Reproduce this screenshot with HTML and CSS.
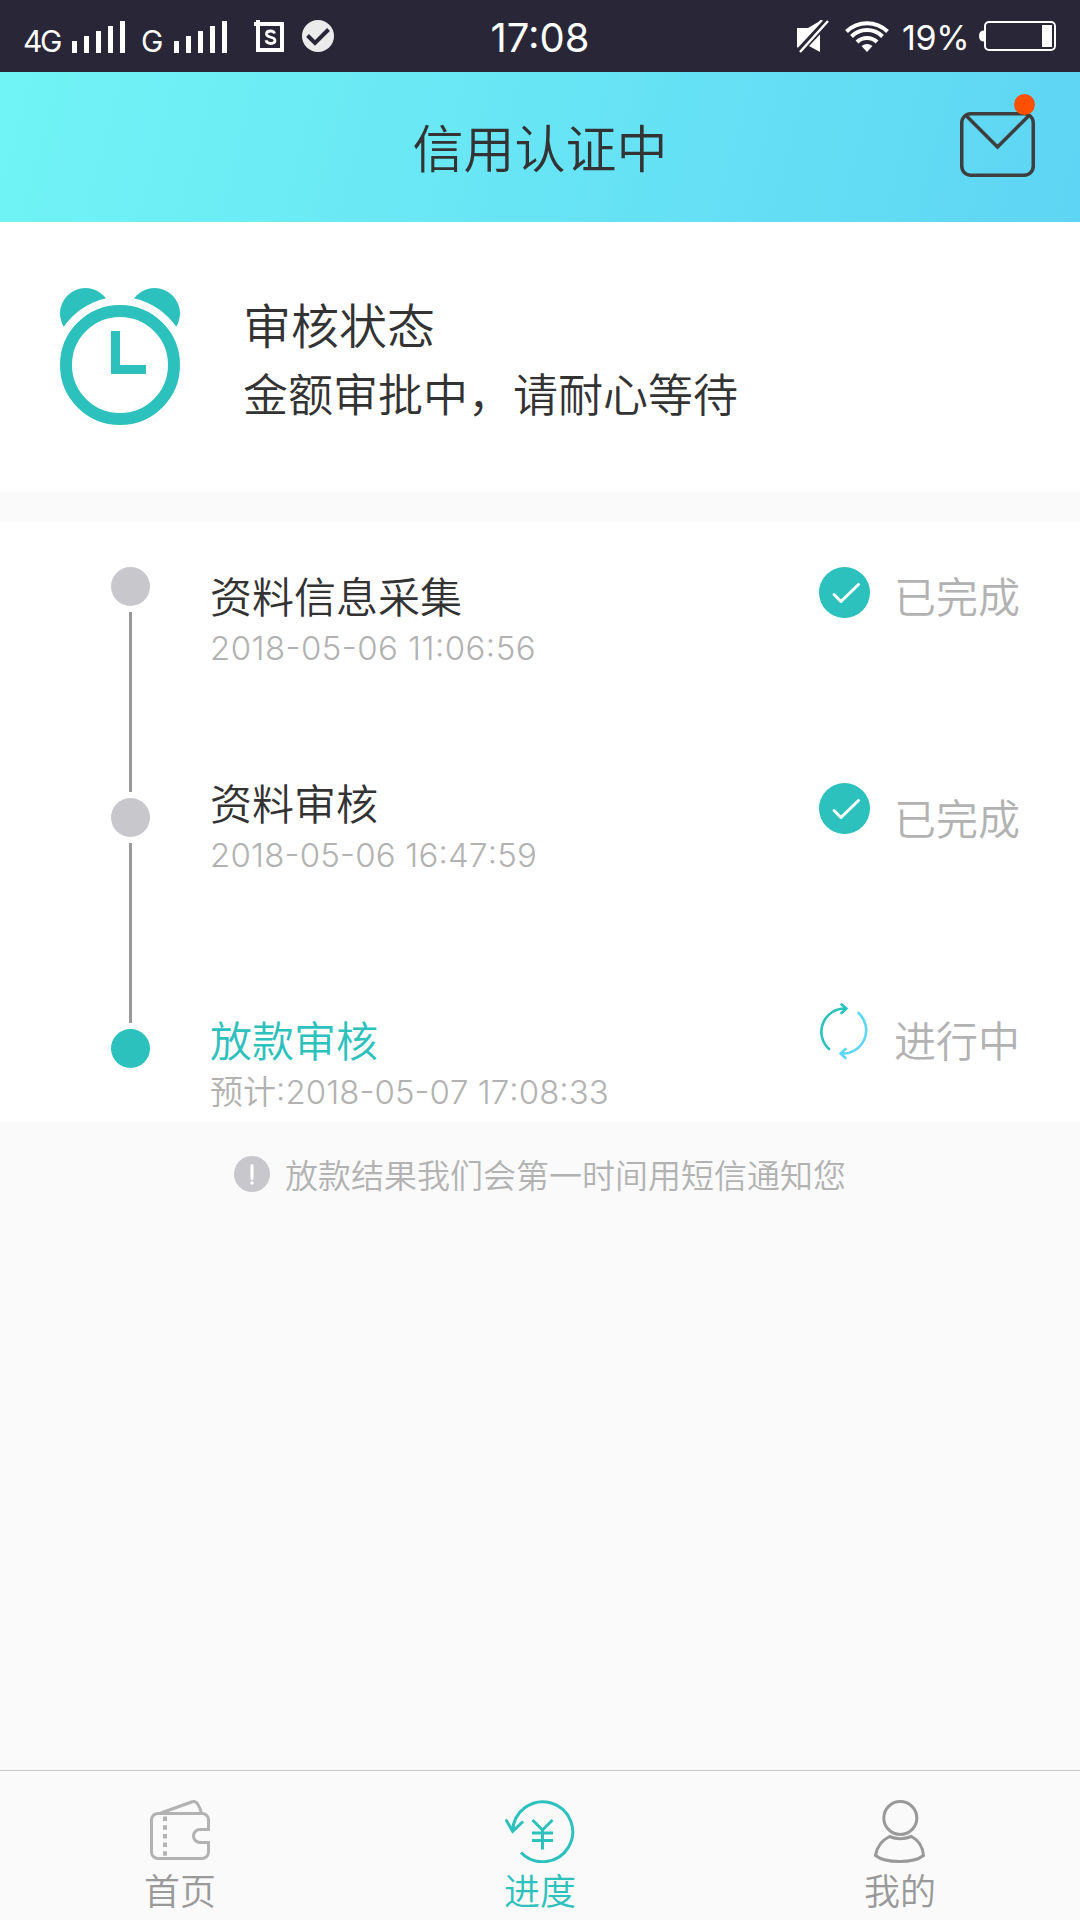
FILE: index.html
```html
<!DOCTYPE html>
<html lang="zh-CN">

<head>
  <meta charset="UTF-8">
  <meta name="viewport" content="width=device-width, initial-scale=1.0">
  <title>信用认证中</title>
  <link rel="stylesheet" href="styles.css">
</head>

<body>

  <div class="status-bar">
    <div class="status-left">
      <span class="net">4G</span>
      <svg class="signal" width="53" height="32" viewBox="0 0 53 32" fill="#fff">
        <path d="M0 20h5v12H0zM12 15h5v17h-5zM24 10h5v22h-5zM36 5h5v27h-5zM48 0h5v32h-5z"/>
      </svg>
      <span class="net net-second">G</span>
      <svg class="signal" width="53" height="32" viewBox="0 0 53 32" fill="#fff">
        <path d="M0 20h5v12H0zM12 15h5v17h-5zM24 10h5v22h-5zM36 5h5v27h-5zM48 0h5v32h-5z"/>
      </svg>
      <svg class="app-icon" width="30" height="32" viewBox="0 0 30 32" fill="none">
        <path d="M4 4h24v26H4z" stroke="#fff" stroke-width="4"/>
        <path d="M0 2h6v4H0zM2 0h4v4H2z" fill="#fff"/>
        <path d="M20.500 13.500C20 11.500 18.500 11 16.500 11c-2.500 0-4 1-4 3 0 4.500 8.500 2 8.500 6.500 0 2-1.800 3-4.300 3-2.500 0-4.200-1-4.700-3.200" stroke="#fff" stroke-width="2.800"/>
      </svg>
      <svg class="check-icon" width="32" height="32" viewBox="0 0 32 32">
        <circle cx="16" cy="16" r="16" fill="#ebebeb"/>
        <path d="M5.500 15.500l7.500 7.500L26.500 9.500" fill="none" stroke="#292637" stroke-width="4"/>
      </svg>
    </div>
    <div class="clock">17:08</div>
    <div class="status-right">
      <svg width="32" height="33" viewBox="0 0 32 33">
        <path d="M0 8h11L23 1v31l-11-6H0z" fill="#fff"/>
        <path d="M2 31L30 1" stroke="#292637" stroke-width="8"/>
        <path d="M0 27L25 0M3 32L31 1" stroke="#fff" stroke-width="2.500"/>
      </svg>
      <svg class="wifi" width="44" height="32" viewBox="0 0 44 32" fill="none" stroke="#fff" stroke-width="4">
        <path d="M1.500 11.500a29.500 29.500 0 0 1 41 0M6.500 16.500a22 22 0 0 1 31 0M12 22a14.500 14.500 0 0 1 20 0"/>
        <path d="M22 32l-5.500-6q5.500-4 11 0z" fill="#fff" stroke="none"/>
      </svg>
      <span class="percent">19%</span>
      <svg class="battery" width="77" height="30" viewBox="0 0 77 30">
        <path d="M5 9.500Q0 9.500 0 15t5 5.500z" fill="#fff"/>
        <rect x="6" y="1" width="70" height="28" rx="4" fill="none" stroke="#fff" stroke-width="2"/>
        <path d="M63 4h10v22H63z" fill="#fff"/>
      </svg>
    </div>
  </div>

  <header class="header">
    <h1 class="header-title">信用认证中</h1>
    <div class="mail">
      <svg width="75" height="65" viewBox="0 0 75 65" fill="none" stroke="#3e3e3e" stroke-width="3.500">
        <rect x="1.750" y="1.750" width="71.500" height="61.500" rx="9"/>
        <path d="M6 3.500l31.500 31.500L69 3.500"/>
      </svg>
      <span class="mail-dot"></span>
    </div>
  </header>

  <section class="summary">
    <svg class="alarm" width="120" height="137" viewBox="0 0 120 137">
      <g fill="#2cc1bd">
        <circle cx="25.500" cy="25.500" r="25.500"/>
        <circle cx="94.500" cy="25.500" r="25.500"/>
      </g>
      <circle cx="60" cy="77" r="68" fill="#fff"/>
      <circle cx="60" cy="77" r="54" fill="none" stroke="#2cc1bd" stroke-width="12"/>
      <path d="M51 43h9v34h26v9H51z" fill="#2cc1bd"/>
    </svg>
    <div class="summary-text">
      <h2>审核状态</h2>
      <p>金额审批中，请耐心等待</p>
    </div>
  </section>

  <section class="timeline">
    <div class="track">
      <span class="dot"></span>
      <span class="line"></span>
      <span class="dot"></span>
      <span class="line"></span>
      <span class="dot active"></span>
    </div>

    <ul class="steps">
      <li class="step">
        <h3>资料信息采集</h3>
        <p>2018-05-06 11:06:56</p>
      </li>
      <li class="step">
        <h3>资料审核</h3>
        <p>2018-05-06 16:47:59</p>
      </li>
      <li class="step active">
        <h3>放款审核</h3>
        <p>预计:2018-05-07 17:08:33</p>
      </li>
    </ul>

    <ul class="states">
      <li class="state">
        <svg width="51" height="51" viewBox="0 0 51 51">
          <circle cx="25.500" cy="25.500" r="25.500" fill="#2cc1bd"/>
          <path d="M15 27.500l7 7L39.500 17.500" fill="none" stroke="#fff" stroke-width="3" stroke-linecap="round" stroke-linejoin="round"/>
        </svg>
        <span>已完成</span>
      </li>
      <li class="state">
        <svg width="51" height="51" viewBox="0 0 51 51">
          <circle cx="25.500" cy="25.500" r="25.500" fill="#2cc1bd"/>
          <path d="M15 27.500l7 7L39.500 17.500" fill="none" stroke="#fff" stroke-width="3" stroke-linecap="round" stroke-linejoin="round"/>
        </svg>
        <span>已完成</span>
      </li>
      <li class="state">
        <svg width="51" height="57" viewBox="0 0 51 57" fill="none" stroke-width="2.600" stroke-linecap="round" stroke-linejoin="round">
          <path d="M10 46A23.300 23.300 0 0 1 27 5.500M22.500 1.500l5 4-5 4.500" stroke="#2cc1bd"/>
          <path d="M39.500 10A23.300 23.300 0 0 1 22 50.500M26.500 46l-5 4.500 5 4.500" stroke="#5ed7f5"/>
        </svg>
        <span>进行中</span>
      </li>
    </ul>
  </section>

  <div class="notice">
    <svg width="36" height="36" viewBox="0 0 36 36">
      <circle cx="18" cy="18" r="18" fill="#c8c7cc"/>
      <path d="M18 9.500v13" stroke="#fff" stroke-width="3" stroke-linecap="round"/>
      <circle cx="18" cy="27" r="1.800" fill="#fff"/>
    </svg>
    <span>放款结果我们会第一时间用短信通知您</span>
  </div>

  <nav class="tabbar">
    <a class="tab">
      <svg width="60" height="63" viewBox="0 0 60 63" fill="none" stroke="#b2b2b2" stroke-width="3">
        <path d="M60 29.500h-10a6.500 6.500 0 0 0 0 13h10M58.500 42V52a6.500 6.500 0 0 1-6.500 6.500H8A6.500 6.500 0 0 1 1.500 52V20A6.500 6.500 0 0 1 8 13.500h44a6.500 6.500 0 0 1 6.500 6.500v9"/>
        <path d="M11 13L41.500 2q4-1.500 6.500 2.500 2 3 3.500 9"/>
        <path d="M15 16.500v40" stroke-width="4" stroke-dasharray="4.500 4.200"/>
      </svg>
      <span>首页</span>
    </a>
    <a class="tab active">
      <svg width="71" height="63" viewBox="0 0 71 63" fill="none" stroke="#2cc1bd" stroke-width="3">
        <path d="M16 52.500A30 30 0 1 0 7.700 31M.8 19.500l6.900 11.800L18 21.500"/>
        <path d="M27.500 20L37.500 30l10-10M37.500 30v19.500M27 33h21M27 40.500h21"/>
      </svg>
      <span>进度</span>
    </a>
    <a class="tab">
      <svg width="53" height="63" viewBox="0 0 53 63" fill="none" stroke="#999" stroke-width="3">
        <circle cx="26.300" cy="18" r="16.500"/>
        <path d="M15.500 36.500Q26 41 37.500 36.500 48.500 42.500 49.500 55.500 42 61.500 25.500 61.500T1.500 55.500Q3.500 42.500 15.500 36.500z"/>
      </svg>
      <span>我的</span>
    </a>
  </nav>

</body>

</html>
```
FILE: styles.css
```css
* {
  box-sizing: border-box;
}

body {
  display: flex;
  flex-direction: column;
  width: 1080px;
  height: 1920px;
  margin: 0;
  overflow: hidden;
  background-color: #fafafa;
  color: #333;
  font-family: "Noto Sans CJK SC", sans-serif;
  font-weight: 350;
}

h1, h2, h3, p, ul {
  margin: 0;
  padding: 0;
  font-weight: 350;
}

ul {
  list-style: none;
}

svg {
  display: block;
  flex-shrink: 0;
}

/* phone status bar */
.status-bar {
  display: grid;
  grid-template-columns: 1fr auto 1fr;
  height: 72px;
  padding: 0 24px;
  background-color: #292637;
  color: #fff;
  font-family: Inter, sans-serif;
  font-weight: 400;
}

.status-left,
.status-right {
  display: flex;
  align-items: flex-start;
  padding-top: 20px;
}

.status-right {
  justify-content: flex-end;
}

.net {
  width: 49px;
  margin-left: -1px;
  padding-top: 1px;
  font-size: 30px;
  line-height: 40px;
  letter-spacing: -2.500px;
}

.net-second {
  width: 33px;
  margin-left: 16px;
}

.signal {
  margin-top: 1px;
}

.app-icon {
  margin-left: 27px;
}

.check-icon {
  margin-left: 18px;
}

.clock {
  font-size: 40px;
  line-height: 75px;
}

.wifi {
  margin-left: 16px;
}

.percent {
  width: 77px;
  margin-left: 13px;
  font-size: 34px;
  line-height: 35px;
  letter-spacing: -0.300px;
}

.battery {
  margin-top: 1px;
}

/* title bar */
.header {
  display: grid;
  grid-template-columns: 1fr auto 1fr;
  height: 150px;
  padding: 0 45px;
  background: linear-gradient(105deg, #71f4f5 0%, #5ed5f4 100%);
}

.header-title {
  grid-column: 2;
  font-size: 51px;
  line-height: 148px;
}

.mail {
  position: relative;
  justify-self: end;
  margin-top: 40px;
}

.mail-dot {
  position: absolute;
  top: -18px;
  right: 0;
  width: 21px;
  height: 21px;
  border-radius: 50%;
  background-color: #ff4f00;
}

/* review summary */
.summary {
  display: flex;
  height: 270px;
  padding: 66px 60px 0;
  background-color: #fff;
}

.summary-text {
  margin-left: 63px;
}

.summary-text h2 {
  font-size: 48px;
  line-height: 70px;
}

.summary-text p {
  font-size: 45px;
  line-height: 70px;
}

/* timeline */
.timeline {
  display: flex;
  height: 600px;
  margin-top: 30px;
  padding: 45px 60px 0 111px;
  background-color: #fff;
}

.track {
  display: flex;
  flex-direction: column;
  align-items: center;
  gap: 6px;
  width: 39px;
}

.dot {
  width: 39px;
  height: 39px;
  border-radius: 50%;
  background-color: #c8c7cc;
}

.dot.active {
  background-color: #2cc1bd;
}

.line {
  width: 3px;
  height: 180px;
  background-color: #999;
}

.steps {
  flex: 1;
  margin-left: 60px;
}

.step {
  height: 207px;
}

.step h3 {
  font-size: 42px;
  line-height: 56px;
}

.step p {
  color: #b2b2b2;
  font-family: Inter, "Noto Sans CJK SC", sans-serif;
  font-size: 33px;
  line-height: 51px;
  letter-spacing: 0.200px;
  font-kerning: none;
  font-feature-settings: "case";
}

.step:first-child p {
  letter-spacing: 0.450px;
}

.step.active {
  padding-top: 30px;
}

.step.active h3 {
  color: #2cc1bd;
}

.step.active p {
  letter-spacing: 0.050px;
}

.states {
  width: 201px;
}

.state {
  display: flex;
  align-items: flex-start;
  justify-content: space-between;
  height: 216px;
  color: #b2b2b2;
  font-size: 42px;
  line-height: 56px;
}

.state:nth-child(2) span {
  padding-top: 6px;
}

.state:nth-child(3) {
  padding-top: 4px;
}

.state:nth-child(3) span {
  padding-top: 8px;
}

/* sms notice */
.notice {
  display: flex;
  justify-content: center;
  gap: 15px;
  padding-top: 34px;
  color: #b2b2b2;
  font-size: 33px;
  line-height: 36px;
}

/* bottom tabs */
.tabbar {
  display: flex;
  height: 150px;
  margin-top: auto;
  border-top: 1px solid #c8c7cc;
}

.tab {
  display: flex;
  flex: 1;
  flex-direction: column;
  align-items: center;
  padding-top: 29px;
  color: #999;
  font-size: 36px;
  line-height: 53px;
}

.tab.active {
  color: #2cc1bd;
}
```
